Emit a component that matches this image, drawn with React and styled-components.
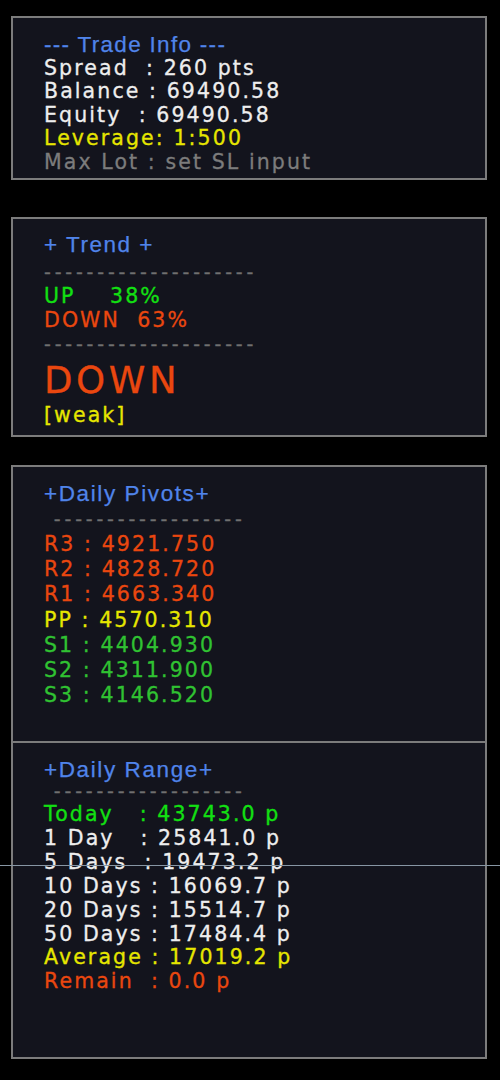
import React from 'react';
import styled, { createGlobalStyle } from 'styled-components';

const GlobalStyle = createGlobalStyle`
  html, body {
    margin: 0;
    padding: 0;
    background: #000;
  }
  body {
    font-family: "DejaVu Sans", Verdana, sans-serif;
  }
`;

const C = {
  blue: '#5084ea',
  white: '#eeeeee',
  yellow: '#e6e600',
  gray: '#7c7c7c',
  lime: '#12e012',
  limeGreen: '#30c232',
  red: '#ea470f',
  dash: '#707070',
};

const Page = styled.div`
  position: relative;
  box-sizing: border-box;
  width: 500px;
  min-height: 1080px;
  padding: 16px 0 0 11px;
  display: flex;
  flex-direction: column;
  background: #000;
`;

const Panel = styled.section`
  box-sizing: border-box;
  width: 476px;
  height: ${(p) => p.$h}px;
  margin-top: ${(p) => p.$mt || 0}px;
  padding: ${(p) => p.$pt}px 0 0 31px;
  background: #13141d;
  border: 2px solid #7c7c7c;
  ${(p) => p.$open && 'border-bottom: none;'}
  display: flex;
  flex-direction: column;
`;

const Title = styled.div`
  font-family: "Liberation Sans", Arial, sans-serif;
  font-size: 22.5px;
  line-height: ${(p) => p.$lh || 26}px;
  letter-spacing: ${(p) => p.$ls || 1.5}px;
  color: ${C.blue};
  -webkit-text-stroke: 0.25px ${C.blue};
  white-space: pre;
`;

const Line = styled.div`
  font-size: 20.5px;
  line-height: ${(p) => p.$lh || 24}px;
  letter-spacing: 2.1px;
  margin-top: ${(p) => p.$mt || 0}px;
  color: ${(p) => p.$c};
  -webkit-text-stroke: 0.3px ${(p) => p.$c};
  white-space: pre;
`;

const List = styled.div`
  display: flex;
  flex-direction: column;
  margin-top: ${(p) => p.$mt || 0}px;
`;

const Dashes = styled.div`
  font-size: 19px;
  line-height: ${(p) => p.$lh || 24}px;
  letter-spacing: 3.8px;
  color: ${C.dash};
  -webkit-text-stroke: 0.3px ${C.dash};
  white-space: pre;
  margin-top: ${(p) => p.$mt || 0}px;
`;

const BigTrend = styled.div`
  font-size: 37px;
  line-height: 38px;
  letter-spacing: 3.6px;
  color: ${C.red};
  -webkit-text-stroke: 0.3px ${C.red};
  margin-top: 6px;
`;

const Crosshair = styled.div`
  position: absolute;
  left: 0;
  right: 0;
  top: 865px;
  height: 1px;
  background: #8796a4;
  pointer-events: none;
`;

const tradeInfo = [
  ['Spread  : 260 pts', C.white],
  ['Balance : 69490.58', C.white],
  ['Equity  : 69490.58', C.white],
  ['Leverage: 1:500', C.yellow],
  ['Max Lot : set SL input', C.gray],
];

const pivots = [
  ['R3 : 4921.750', C.red],
  ['R2 : 4828.720', C.red],
  ['R1 : 4663.340', C.red],
  ['PP : 4570.310', C.yellow],
  ['S1 : 4404.930', C.limeGreen],
  ['S2 : 4311.900', C.limeGreen],
  ['S3 : 4146.520', C.limeGreen],
];

const ranges = [
  ['Today   : 43743.0 p', C.lime],
  ['1 Day   : 25841.0 p', C.white],
  ['5 Days  : 19473.2 p', C.white],
  ['10 Days : 16069.7 p', C.white],
  ['20 Days : 15514.7 p', C.white],
  ['50 Days : 17484.4 p', C.white],
  ['Average : 17019.2 p', C.yellow],
  ['Remain  : 0.0 p', C.red],
];

const TREND_DASH = '-'.repeat(20);
const LIST_DASH = ' ' + '-'.repeat(18);

const App = () => {
  return (
    <>
      <GlobalStyle />
      <Page>
        <Panel $h={164} $pt={15}>
          <Title $lh={23.5} $ls={1.3}>
            --- Trade Info ---
          </Title>
          {tradeInfo.map(([text, color]) => (
            <Line key={text} $c={color} $lh={23.5}>
              {text}
            </Line>
          ))}
        </Panel>

        <Panel $h={220} $mt={37} $pt={13}>
          <Title>+ Trend +</Title>
          <Dashes $mt={2}>{TREND_DASH}</Dashes>
          <Line $c={C.lime}>UP    38%</Line>
          <Line $c={C.red}>DOWN  63%</Line>
          <Dashes>{TREND_DASH}</Dashes>
          <BigTrend>DOWN</BigTrend>
          <Line $c={C.yellow} $lh={22} $mt={4}>
            [weak]
          </Line>
        </Panel>

        <Panel $h={276} $mt={28} $pt={14} $open>
          <Title $ls={1.6}>+Daily Pivots+</Title>
          <Dashes>{LIST_DASH}</Dashes>
          <List $mt={1}>
            {pivots.map(([text, color]) => (
              <Line key={text} $c={color} $lh={25.2}>
                {text}
              </Line>
            ))}
          </List>
        </Panel>

        <Panel $h={318} $pt={14}>
          <Title $ls={1.6}>+Daily Range+</Title>
          <Dashes $lh={20} $mt={-2}>
            {LIST_DASH}
          </Dashes>
          <List $mt={2}>
            {ranges.map(([text, color]) => (
              <Line key={text} $c={color} $lh={23.9}>
                {text}
              </Line>
            ))}
          </List>
        </Panel>

        <Crosshair />
      </Page>
    </>
  );
};

export default App;
